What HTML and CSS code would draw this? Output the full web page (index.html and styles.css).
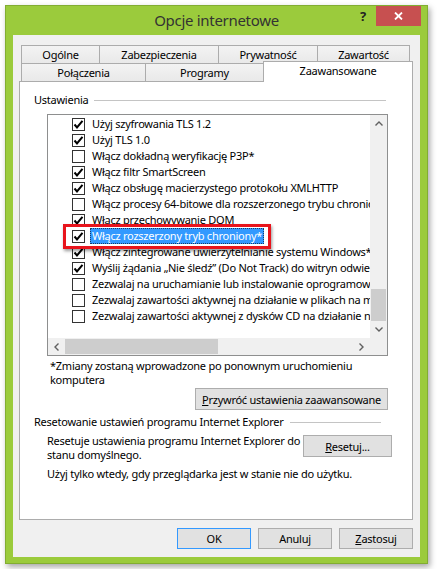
FILE: index.html
```html
<!DOCTYPE html>
<html lang="pl">
<head>
  <meta charset="UTF-8">
  <title>Opcje internetowe</title>
  <link rel="stylesheet" href="styles.css">
</head>
<body>

  <div class="window">
    <div class="titlebar">
      <span></span>
      <span class="title">Opcje internetowe</span>
      <div class="caption-buttons">
        <span class="help-btn">?</span>
        <span class="close-btn">
          <svg width="9" height="8" viewBox="0 0 9 8"><path d="M1 0.5 L8 7.5 M8 0.5 L1 7.5" stroke="#fff" stroke-width="1.8"/></svg>
        </span>
      </div>
    </div>

    <div class="client">
      <!-- tabs -->
      <div class="tabs">
        <div class="tab-row">
          <div class="tab" style="width:79px">Ogólne</div>
          <div class="tab" style="width:120px">Zabezpieczenia</div>
          <div class="tab" style="width:100px">Prywatność</div>
          <div class="tab" style="width:93px">Zawartość</div>
        </div>
        <div class="tab-row">
          <div class="tab" style="width:125px">Połączenia</div>
          <div class="tab" style="width:119px">Programy</div>
          <div class="tab active" style="width:150px">Zaawansowane</div>
        </div>
      </div>

      <div class="panel">
        <div class="group-title first"><span>Ustawienia</span><i class="rule"></i></div>

        <div class="listbox">
          <div class="list-view">
            <div class="item"><span class="check"><svg width="11" height="11" viewBox="0 0 11 11"><path d="M1.5 5.5 L4 8.5 L9.5 1.8" fill="none" stroke="#000" stroke-width="2"/></svg></span><span class="label">Użyj szyfrowania TLS 1.2</span></div>
            <div class="item"><span class="check"><svg width="11" height="11" viewBox="0 0 11 11"><path d="M1.5 5.5 L4 8.5 L9.5 1.8" fill="none" stroke="#000" stroke-width="2"/></svg></span><span class="label">Użyj TLS 1.0</span></div>
            <div class="item"><span class="check"></span><span class="label">Włącz dokładną weryfikację P3P*</span></div>
            <div class="item"><span class="check"><svg width="11" height="11" viewBox="0 0 11 11"><path d="M1.5 5.5 L4 8.5 L9.5 1.8" fill="none" stroke="#000" stroke-width="2"/></svg></span><span class="label">Włącz filtr SmartScreen</span></div>
            <div class="item"><span class="check"><svg width="11" height="11" viewBox="0 0 11 11"><path d="M1.5 5.5 L4 8.5 L9.5 1.8" fill="none" stroke="#000" stroke-width="2"/></svg></span><span class="label">Włącz obsługę macierzystego protokołu XMLHTTP</span></div>
            <div class="item"><span class="check"></span><span class="label">Włącz procesy 64-bitowe dla rozszerzonego trybu chronionego*</span></div>
            <div class="item"><span class="check"><svg width="11" height="11" viewBox="0 0 11 11"><path d="M1.5 5.5 L4 8.5 L9.5 1.8" fill="none" stroke="#000" stroke-width="2"/></svg></span><span class="label">Włącz przechowywanie DOM</span></div>
            <div class="item selected"><span class="check"><svg width="11" height="11" viewBox="0 0 11 11"><path d="M1.5 5.5 L4 8.5 L9.5 1.8" fill="none" stroke="#000" stroke-width="2"/></svg></span><span class="label">Włącz rozszerzony tryb chroniony*</span></div>
            <div class="item"><span class="check"><svg width="11" height="11" viewBox="0 0 11 11"><path d="M1.5 5.5 L4 8.5 L9.5 1.8" fill="none" stroke="#000" stroke-width="2"/></svg></span><span class="label">Włącz zintegrowane uwierzytelnianie systemu Windows*</span></div>
            <div class="item"><span class="check"><svg width="11" height="11" viewBox="0 0 11 11"><path d="M1.5 5.5 L4 8.5 L9.5 1.8" fill="none" stroke="#000" stroke-width="2"/></svg></span><span class="label">Wyślij żądania „Nie śledź” (Do Not Track) do witryn odwiedzanych</span></div>
            <div class="item"><span class="check"></span><span class="label">Zezwalaj na uruchamianie lub instalowanie oprogramowania</span></div>
            <div class="item"><span class="check"></span><span class="label">Zezwalaj zawartości aktywnej na działanie w plikach na moim komputerze</span></div>
            <div class="item"><span class="check"></span><span class="label">Zezwalaj zawartości aktywnej z dysków CD na działanie na moim komputerze</span></div>

            <div class="marker"></div>
          </div>

          <div class="vscroll">
            <span class="arrow"><svg width="8" height="5" viewBox="0 0 8 5"><path d="M0.5 4.5 L4 1 L7.5 4.5" fill="none" stroke="#606060" stroke-width="1.4"/></svg></span>
            <div class="track-v"><span class="thumb-v"></span></div>
            <span class="arrow"><svg width="8" height="5" viewBox="0 0 8 5"><path d="M0.5 0.5 L4 4 L7.5 0.5" fill="none" stroke="#606060" stroke-width="1.4"/></svg></span>
          </div>

          <div class="hscroll">
            <span class="arrow"><svg width="5" height="8" viewBox="0 0 5 8"><path d="M4.5 0.5 L1 4 L4.5 7.5" fill="none" stroke="#606060" stroke-width="1.4"/></svg></span>
            <div class="track-h"><span class="thumb-h"></span></div>
            <span class="arrow"><svg width="5" height="8" viewBox="0 0 5 8"><path d="M0.5 0.5 L4 4 L0.5 7.5" fill="none" stroke="#606060" stroke-width="1.4"/></svg></span>
          </div>

          <div class="corner"></div>
        </div>

        <p class="note">*Zmiany zostaną wprowadzone po ponownym uruchomieniu<br>komputera</p>
        <button class="btn btn-restore"><u>P</u>rzywróć ustawienia zaawansowane</button>

        <div class="group-title second"><span>Resetowanie ustawień programu Internet Explorer</span><i class="rule"></i></div>
        <div class="reset-row">
          <p>Resetuje ustawienia programu Internet Explorer do<br>stanu domyślnego.</p>
          <button class="btn btn-reset"><u>R</u>esetuj...</button>
        </div>
        <p class="hint">Użyj tylko wtedy, gdy przeglądarka jest w stanie nie do użytku.</p>
      </div>

      <div class="dialog-buttons">
        <button class="btn default">OK</button>
        <button class="btn">Anuluj</button>
        <button class="btn"><u>Z</u>astosuj</button>
      </div>
    </div>
  </div>

</body>
</html>
```

FILE: styles.css
```css
* {
  margin: 0;
  padding: 0;
  box-sizing: border-box;
}

body {
  background: #fff;
  padding: 5px;
  font-family: "Noto Sans", "Open Sans", sans-serif;
  font-size: 11px;
  letter-spacing: -0.25px;
  color: #000;
}

/* window frame */
.window {
  width: 423px;
  height: 559px;
  background: #9bcb3c;
  border: 1px solid #82ad32;
  box-shadow: 2px 3px 6px rgba(0, 0, 0, 0.35);
  display: flex;
  flex-direction: column;
}

.titlebar {
  height: 29px;
  display: grid;
  grid-template-columns: 1fr auto 1fr;
  align-items: start;
}

.title {
  font-size: 15px;
  letter-spacing: -0.3px;
  line-height: 29px;
  color: #333;
}

.caption-buttons {
  justify-self: end;
  display: flex;
  margin-right: 6px;
}

.help-btn {
  width: 26px;
  height: 20px;
  line-height: 20px;
  text-align: center;
  font-size: 13px;
  font-weight: bold;
  color: #222;
}

.close-btn {
  width: 45px;
  height: 20px;
  background: #c75050;
  display: flex;
  align-items: center;
  justify-content: center;
}

.client {
  flex: 1;
  margin: 0 7px 6px;
  background: #f0f0f0;
  padding: 10px 7px 0 6px;
  display: flex;
  flex-direction: column;
}

/* tabs */
.tabs {
  padding-left: 2px;
}

.tab-row {
  display: flex;
  height: 18px;
}

.tab {
  flex-shrink: 0;
  height: 18px;
  margin-right: -1px;
  border: 1px solid #acacac;
  border-bottom: none;
  background: linear-gradient(#f3f3f3, #e9e9e9);
  text-align: center;
  line-height: 17px;
}

.tab.active {
  position: relative;
  z-index: 1;
  height: 21px;
  margin-top: -2px;
  background: #fff;
  line-height: 18px;
}

.panel {
  flex-shrink: 0;
  height: 439px;
  background: #fff;
  border: 1px solid #acacac;
  display: flex;
  flex-direction: column;
}

.group-title {
  display: flex;
  align-items: center;
  gap: 6px;
  line-height: 14px;
  white-space: nowrap;
}

.group-title.first {
  margin: 11px 26px 0 14px;
}

.group-title.second {
  margin: 5px 31px 0 14px;
}

.group-title .rule {
  flex: 1;
  height: 1px;
  background: #c4c4c4;
}

/* settings list */
.listbox {
  margin: 7px 0 0 27px;
  width: 341px;
  height: 242px;
  border: 1px solid #8e8f8f;
  display: grid;
  grid-template-columns: 1fr 17px;
  grid-template-rows: 1fr 17px;
}

.list-view {
  position: relative;
  overflow: hidden;
  padding-top: 1px;
}

.item {
  display: flex;
  align-items: center;
  height: 16px;
  padding-left: 24px;
  white-space: nowrap;
}

.check {
  flex-shrink: 0;
  width: 13px;
  height: 13px;
  margin-right: 5px;
  border: 1px solid #333;
  background: #fff;
  display: flex;
  align-items: center;
  justify-content: center;
}

.label {
  padding: 0 2px;
  line-height: 16px;
}

.item.selected .label {
  background: #3399ff;
  color: #fff;
  outline: 1px dotted #1a3d66;
  outline-offset: -1px;
}

.marker {
  position: absolute;
  left: 15px;
  top: 109px;
  width: 208px;
  height: 25px;
  border: 3px solid #e8141c;
  box-shadow: 1px 2px 3px rgba(0, 0, 0, 0.4);
}

.vscroll {
  background: #f0f0f0;
  display: flex;
  flex-direction: column;
}

.arrow {
  flex-shrink: 0;
  width: 17px;
  height: 17px;
  display: flex;
  align-items: center;
  justify-content: center;
}

.track-v {
  flex: 1;
  display: flex;
  flex-direction: column;
  justify-content: flex-end;
  align-items: center;
}

.thumb-v {
  width: 15px;
  height: 32px;
  background: #cdcdcd;
}

.hscroll {
  background: #f0f0f0;
  display: flex;
  align-items: center;
}

.track-h {
  flex: 1;
  display: flex;
  align-items: center;
}

.thumb-h {
  width: 153px;
  height: 15px;
  background: #cdcdcd;
}

.corner {
  background: #f0f0f0;
}

.note {
  margin: 3px 0 0 30px;
  line-height: 14px;
}

/* buttons */
.btn {
  font-family: inherit;
  font-size: 11px;
  letter-spacing: -0.25px;
  color: #000;
  background: #e1e1e1;
  border: 1px solid #adadad;
  height: 22px;
}

.btn-restore {
  align-self: flex-end;
  width: 193px;
  margin: 1px 24px 0 0;
}

.reset-row {
  display: flex;
  margin: 5px 20px 0 27px;
}

.reset-row p {
  flex: 1;
  line-height: 14px;
  white-space: nowrap;
}

.btn-reset {
  flex-shrink: 0;
  width: 89px;
  margin-top: 1px;
}

.hint {
  margin: 5px 0 0 27px;
  line-height: 14px;
}

.dialog-buttons {
  display: flex;
  justify-content: flex-end;
  gap: 7px;
  margin-top: 8px;
}

.dialog-buttons .btn {
  width: 74px;
  height: 21px;
}

.btn.default {
  border-color: #3399ff;
}
```
